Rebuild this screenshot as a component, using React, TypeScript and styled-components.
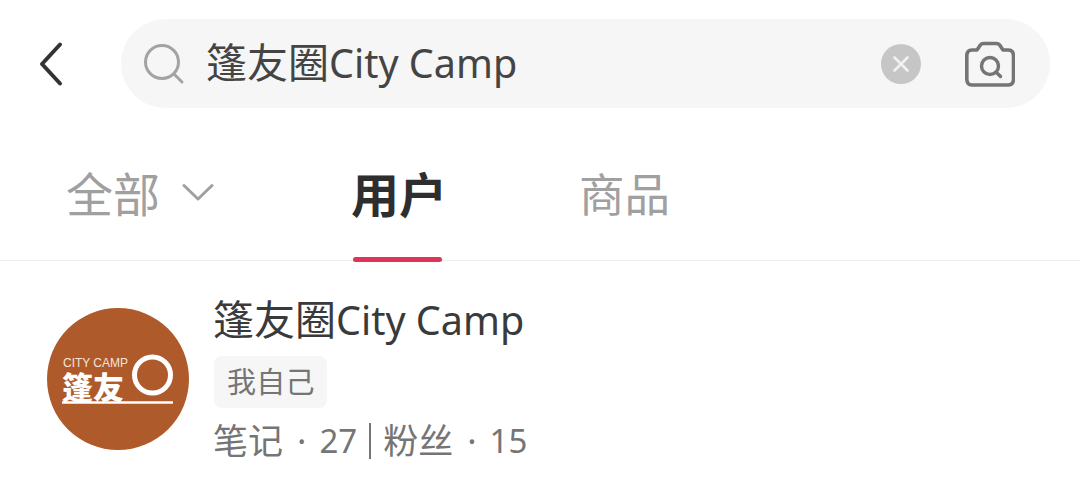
import styled, { createGlobalStyle } from 'styled-components';

const GlobalStyle = createGlobalStyle`
    html, body {
        margin: 0;
        padding: 0;
        background: #fff;
    }
    body {
        font-family: 'Noto Sans', 'Noto Sans CJK SC', sans-serif;
    }
`;

const App: React.FC = () => {
    return (
        <StyledPage>
            <GlobalStyle />
            <StyledTopBar>
                <StyledBackButton>
                    <svg width="26" height="46" viewBox="0 0 26 46" fill="none">
                        <path d="M22 3.5 L4 23 L22 42.5" stroke="#333" strokeWidth="4" strokeLinecap="round" strokeLinejoin="round" />
                    </svg>
                </StyledBackButton>
                <StyledSearchBox>
                    <svg width="42" height="42" viewBox="0 0 42 42" fill="none">
                        <circle cx="19" cy="19" r="16.5" stroke="#a3a3a3" strokeWidth="3" />
                        <path d="M31 31 L39 39" stroke="#a3a3a3" strokeWidth="3" strokeLinecap="round" />
                    </svg>
                    <StyledSearchText>
                        篷友圈<StyledLatin>City Camp</StyledLatin>
                    </StyledSearchText>
                    <StyledClearButton>
                        <svg width="18" height="18" viewBox="0 0 18 18" fill="none">
                            <path d="M2.5 2.5 L15.5 15.5 M15.5 2.5 L2.5 15.5" stroke="#f2f2f2" strokeWidth="2.6" strokeLinecap="round" />
                        </svg>
                    </StyledClearButton>
                    <svg width="50" height="46" viewBox="0 0 50 46" fill="none">
                        <path
                            d="M7 9 H12 L15.500 3.800 Q16.500 2.500 18.500 2.500 H31.500 Q33.500 2.500 34.500 3.800 L38 9 H43 Q48.500 9 48.500 15 V38 Q48.500 44 43 44 H7 Q1.800 44 1.800 38 V15 Q1.800 9 7 9 Z"
                            stroke="#757575"
                            strokeWidth="3.600"
                            strokeLinejoin="round"
                        />
                        <circle cx="25" cy="25" r="8.500" stroke="#757575" strokeWidth="3.400" />
                        <path d="M31.500 31.500 L35.500 35.500" stroke="#757575" strokeWidth="3.400" strokeLinecap="round" />
                    </svg>
                </StyledSearchBox>
            </StyledTopBar>
            <StyledTabBar>
                <StyledTab>
                    全部
                    <svg width="32" height="18" viewBox="0 0 32 18" fill="none">
                        <path d="M2 2.500 L16 16 L30 2.500" stroke="#a0a0a0" strokeWidth="3" strokeLinecap="round" strokeLinejoin="round" />
                    </svg>
                </StyledTab>
                <StyledTab $active>用户</StyledTab>
                <StyledTab>商品</StyledTab>
            </StyledTabBar>
            <StyledUserRow>
                <StyledAvatar>
                    <svg width="142" height="142" viewBox="0 0 142 142">
                        <circle cx="71" cy="71" r="71" fill="#ae5a2b" />
                        <text x="16" y="59" fill="#f6e6d8" fontSize="12" fontWeight="400" fontFamily="'Liberation Sans', sans-serif" textLength="65">
                            CITY CAMP
                        </text>
                        <text x="15" y="91" fill="#fff" fontSize="31" fontWeight="900" fontFamily="'Noto Sans CJK SC', sans-serif" textLength="62">
                            篷友
                        </text>
                        <circle cx="105.500" cy="67" r="18" fill="none" stroke="#fff" strokeWidth="5" />
                        <path d="M15 94.500 H126" stroke="#fff" strokeWidth="2.500" />
                    </svg>
                </StyledAvatar>
                <StyledUserInfo>
                    <StyledUserName>
                        篷友圈<StyledLatin>City Camp</StyledLatin>
                    </StyledUserName>
                    <StyledSelfTag>我自己</StyledSelfTag>
                    <StyledStats>
                        笔记<StyledDot>·</StyledDot>
                        <StyledCount>27</StyledCount>
                        <StyledBar />粉丝<StyledDot>·</StyledDot>
                        <StyledCount>15</StyledCount>
                    </StyledStats>
                </StyledUserInfo>
            </StyledUserRow>
        </StyledPage>
    );
};

const StyledPage = styled.div`
    width: 1080px;
    height: 502px;
    overflow: hidden;
    background: #fff;
`;

const StyledTopBar = styled.div`
    display: flex;
    align-items: flex-start;
    padding: 19px 30px 0 38px;
`;

const StyledBackButton = styled.div`
    display: flex;
    width: 83px;
    height: 89px;
    align-items: center;
`;

const StyledSearchBox = styled.div`
    display: flex;
    flex: 1;
    height: 89px;
    align-items: center;
    padding: 0 35px 0 22px;
    border-radius: 45px;
    background-color: #f6f6f6;
`;

const StyledSearchText = styled.div`
    flex: 1;
    margin: -2px 0 0 21px;
    font-size: 41px;
    line-height: 89px;
    color: #444;
    white-space: nowrap;
`;

const StyledLatin = styled.span`
    font-size: 39.5px;
`;

const StyledClearButton = styled.div`
    display: flex;
    width: 40px;
    height: 40px;
    margin-right: 44px;
    align-items: center;
    justify-content: center;
    border-radius: 50%;
    background-color: #c6c6c6;
`;

const StyledTabBar = styled.div`
    display: flex;
    height: 153px;
    padding-left: 66px;
    gap: 137px;
    border-bottom: 1px solid #eeeeee;
    box-sizing: border-box;
`;

const StyledTab = styled.div<{ $active?: boolean }>`
    position: relative;
    display: flex;
    height: 152px;
    padding-top: 15px;
    box-sizing: border-box;
    align-items: center;
    gap: 22px;
    font-size: ${(props) => (props.$active ? 48 : 47)}px;
    font-weight: ${(props) => (props.$active ? 700 : 400)};
    color: ${(props) => (props.$active ? '#2e2e2e' : '#a0a0a0')};
    white-space: nowrap;

    &:last-child {
        margin-left: -5px;
        font-size: 45.5px;
    }

    &::after {
        content: '';
        display: ${(props) => (props.$active ? 'block' : 'none')};
        position: absolute;
        left: 2px;
        right: 5px;
        bottom: -2px;
        height: 5px;
        border-radius: 3px;
        background-color: #df3458;
    }
`;

const StyledUserRow = styled.div`
    display: flex;
    align-items: flex-start;
    padding: 34px 0 0 47px;
`;

const StyledAvatar = styled.div`
    width: 142px;
    height: 142px;
    margin: 13px 24px 0 0;
    flex-shrink: 0;
`;

const StyledUserInfo = styled.div`
    display: flex;
    flex-direction: column;
    align-items: flex-start;
`;

const StyledUserName = styled.div`
    font-size: 41px;
    line-height: 48px;
    color: #3a3a3a;
    white-space: nowrap;
`;

const StyledSelfTag = styled.div`
    margin: 12px 0 0 1px;
    padding: 0 12px 0 13px;
    font-size: 29px;
    line-height: 52px;
    letter-spacing: 0.2px;
    color: #757575;
    background-color: #f6f6f6;
    border-radius: 8px;
`;

const StyledStats = styled.div`
    display: flex;
    align-items: center;
    margin-top: 10px;
    font-size: 35px;
    line-height: 46px;
    color: #757575;
    white-space: nowrap;
`;

const StyledCount = styled.span`
    font-size: 33px;
`;

const StyledDot = styled.span`
    margin: 0 13px 0 14px;
`;

const StyledBar = styled.span`
    width: 2px;
    height: 36px;
    margin: 0 12px;
    background-color: #757575;
`;

export default App;
